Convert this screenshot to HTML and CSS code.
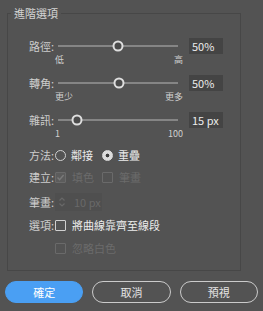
FILE: index.html
```html
<!DOCTYPE html>
<html lang="zh-Hant">
<head>
    <meta charset="UTF-8">
    <title>進階選項</title>
    <link rel="stylesheet" href="styles.css">
</head>
<body>
    <div class="dialog">
        <fieldset class="group">
            <legend>進階選項</legend>

            <div class="slider-row">
                <div class="label">路徑:</div>
                <div class="track"><span class="thumb" style="left: 50%"></span></div>
                <div class="value">50%</div>
            </div>
            <div class="scale"><span>低</span><span>高</span></div>

            <div class="slider-row">
                <div class="label">轉角:</div>
                <div class="track"><span class="thumb" style="left: 51%"></span></div>
                <div class="value">50%</div>
            </div>
            <div class="scale"><span>更少</span><span>更多</span></div>

            <div class="slider-row">
                <div class="label">雜訊:</div>
                <div class="track"><span class="thumb" style="left: 16%"></span></div>
                <div class="value">15 px</div>
            </div>
            <div class="scale"><span>1</span><span>100</span></div>

            <div class="option-row method">
                <div class="label">方法:</div>
                <div class="choice first"><span class="radio"></span>鄰接</div>
                <div class="choice"><span class="radio checked"></span>重疊</div>
            </div>

            <div class="option-row create">
                <div class="label">建立:</div>
                <div class="choice first disabled">
                    <span class="checkbox checked">
                        <svg width="9" height="9" viewBox="0 0 9 9"><path d="M1.5 4.6 L3.6 6.8 L7.6 2" fill="none" stroke="#7a7a7a" stroke-width="1.4"/></svg>
                    </span>填色
                </div>
                <div class="choice disabled"><span class="checkbox"></span>筆畫</div>
            </div>

            <div class="option-row stroke">
                <div class="label">筆畫:</div>
                <div class="spinner">
                    <svg class="spin-icon" width="10" height="12" viewBox="0 0 10 12">
                        <path d="M2.5 4.5 L5 2 L7.5 4.5 M2.5 7.5 L5 10 L7.5 7.5" fill="none" stroke="#686868" stroke-width="1.2"/>
                    </svg>
                    <span>10 px</span>
                </div>
            </div>

            <div class="option-row snap">
                <div class="label">選項:</div>
                <div class="choice single"><span class="checkbox enabled"></span>將曲線靠齊至線段</div>
            </div>

            <div class="option-row ignore">
                <div class="label"></div>
                <div class="choice single disabled"><span class="checkbox"></span>忽略白色</div>
            </div>
        </fieldset>

        <div class="buttons">
            <button class="button primary">確定</button>
            <button class="button">取消</button>
            <button class="button">預視</button>
        </div>
    </div>
</body>
</html>
```

FILE: styles.css
```css
body {
    margin: 0;
    background-color: #535353;
    font-family: "Noto Sans CJK TC", "Noto Sans", sans-serif;
    font-size: 11px;
    color: #d2d2d2;
}
.dialog {
    width: 263px;
    height: 311px;
    overflow: hidden;
}
.group {
    margin: 6px 22px 0 7px;
    padding: 18px 0 14px 0;
    border: 1px solid #474747;
    min-width: 0;
}
.group legend {
    margin-left: 3px;
    padding: 0 3px;
    line-height: 14px;
    color: #d4d4d4;
}
.label {
    width: 46px;
    flex: none;
    text-align: right;
    color: #cdcdcd;
}
.slider-row {
    display: flex;
    align-items: center;
    height: 16px;
}
.track {
    position: relative;
    width: 120px;
    height: 2px;
    margin-left: 4px;
    background-color: #858585;
}
.thumb {
    position: absolute;
    top: 50%;
    width: 11px;
    height: 11px;
    box-sizing: border-box;
    border: 2px solid #dedede;
    border-radius: 50%;
    background-color: #4b4b4b;
    transform: translate(-50%, -50%);
}
.value {
    width: 34px;
    height: 16px;
    margin-left: 11px;
    box-sizing: border-box;
    padding-left: 3px;
    background-color: #444;
    color: #ececec;
    line-height: 16px;
}
.scale {
    display: flex;
    justify-content: space-between;
    width: 128px;
    height: 12px;
    margin: 0 0 9px 47px;
    font-size: 9px;
    line-height: 12px;
    color: #cfcfcf;
}
.option-row {
    display: flex;
    align-items: center;
    height: 16px;
}
.method {
    margin-top: -2px;
}
.create {
    margin-top: 6px;
}
.stroke {
    height: 18px;
    margin-top: 8px;
}
.snap {
    margin-top: 6px;
}
.ignore {
    margin-top: 7px;
}
.choice {
    display: flex;
    align-items: center;
    color: #ececec;
}
.choice.first {
    width: 47px;
    margin-left: 1px;
}
.choice.single {
    margin-left: 1px;
}
.choice.disabled {
    color: #6b6b6b;
}
.radio {
    width: 11px;
    height: 11px;
    box-sizing: border-box;
    border: 1px solid #d0d0d0;
    border-radius: 50%;
    margin-right: 5px;
}
.radio.checked {
    border-color: #dcdcdc;
    background: radial-gradient(circle, #3c3c3c 0 1.6px, #dcdcdc 2.2px);
}
.checkbox {
    display: flex;
    align-items: center;
    justify-content: center;
    width: 11px;
    height: 11px;
    box-sizing: border-box;
    border: 1px solid #6a6a6a;
    border-radius: 1px;
    margin-right: 6px;
}
.checkbox.checked {
    background-color: #5c5c5c;
}
.checkbox.enabled {
    border-color: #d0d0d0;
}
.spinner {
    display: flex;
    align-items: center;
    width: 47px;
    height: 18px;
    margin-left: 1px;
    box-sizing: border-box;
    padding-left: 2px;
    background-color: #4f4f4f;
    color: #696969;
}
.spin-icon {
    margin-right: 7px;
}
.buttons {
    display: flex;
    gap: 9px;
    margin-top: 10px;
    padding: 0 5px;
}
.button {
    flex: 1;
    height: 22px;
    border: 1.5px solid #cbcbcb;
    border-radius: 11px;
    background: transparent;
    font-family: inherit;
    font-size: 11px;
    color: #e6e6e6;
    padding: 0;
}
.button.primary {
    background-color: #4a9ff3;
    border-color: #4a9ff3;
    color: #fff;
}
```
